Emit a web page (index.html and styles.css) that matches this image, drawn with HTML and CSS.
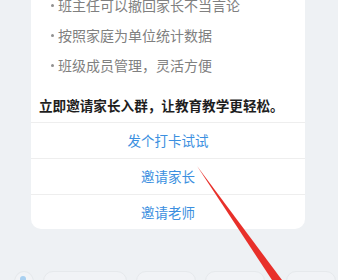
FILE: index.html
```html
<!DOCTYPE html>
<html lang="zh">
<head>
<meta charset="utf-8">
<link rel="stylesheet" href="styles.css">
</head>
<body>
<div class="page">
  <div class="card">
    <ul class="features">
      <li>班主任可以撤回家长不当言论</li>
      <li>按照家庭为单位统计数据</li>
      <li>班级成员管理，灵活方便</li>
    </ul>
    <p class="lead">立即邀请家长入群，让教育教学更轻松。</p>
    <div class="actions">
      <div class="action">发个打卡试试</div>
      <div class="action">邀请家长</div>
      <div class="action">邀请老师</div>
    </div>
  </div>
  <div class="toolbar">
    <span class="tool round"><span class="dot"></span></span>
    <span class="tool w1"></span>
    <span class="tool w2"></span>
    <span class="tool w3"></span>
    <span class="tool w4"></span>
  </div>
</div>
<svg class="arrow" width="338" height="280" viewBox="0 0 338 280">
  <polygon points="197,166 282,280 272,280" fill="#e8302a"/>
</svg>
</body>
</html>
```
FILE: styles.css
```css
html, body {
  margin: 0;
  padding: 0;
  width: 338px;
  height: 280px;
  overflow: hidden;
  background: #eef1f4;
  font-family: "Noto Sans CJK SC", "Noto Sans", sans-serif;
}
.page {
  position: relative;
  width: 338px;
  height: 280px;
}
.card {
  margin: -10px 33px 0 31px;
  background: #ffffff;
  border-radius: 10px;
  padding: 0;
}
.features {
  list-style: none;
  margin: 0;
  padding: 0 0 0 20px;
}
.features li {
  height: 30px;
  line-height: 30px;
  font-size: 14px;
  color: #808080;
  white-space: nowrap;
  position: relative;
  padding-left: 7px;
}
.features li::before {
  content: "";
  position: absolute;
  left: 0;
  top: 14px;
  width: 3px;
  height: 3px;
  border-radius: 50%;
  background: #909090;
}
.lead {
  margin: 15px 0 0 0;
  padding: 0 0 7px 8px;
  height: 20px;
  line-height: 20px;
  font-size: 13.6px;
  font-weight: bold;
  color: #1e1e1e;
  white-space: nowrap;
}
.actions {
  display: flex;
  flex-direction: column;
}
.action {
  height: 35px;
  line-height: 35px;
  border-top: 1px solid #eeeeee;
  text-align: center;
  font-size: 13.5px;
  color: #3b8fe0;
}
.action:last-child {
  height: 34px;
  line-height: 34px;
}
.toolbar {
  display: flex;
  align-items: flex-start;
  gap: 9px;
  padding: 42px 0 0 14px;
}
.tool {
  display: block;
  height: 20px;
  border: 1px solid #e6e9ec;
  background: #f1f3f6;
  border-radius: 10px;
  flex: none;
}
.round {
  width: 18px;
  border-radius: 50%;
  position: relative;
}
.dot {
  position: absolute;
  left: 5px;
  top: 4px;
  width: 6px;
  height: 6px;
  border-radius: 50%;
  background: #a9d0f0;
}
.w1 { width: 82px; }
.w2 { width: 58px; }
.w3 { width: 58px; }
.w4 { width: 48px; margin-left: 12px; }
.arrow {
  position: absolute;
  left: 0;
  top: 0;
  pointer-events: none;
}
```
